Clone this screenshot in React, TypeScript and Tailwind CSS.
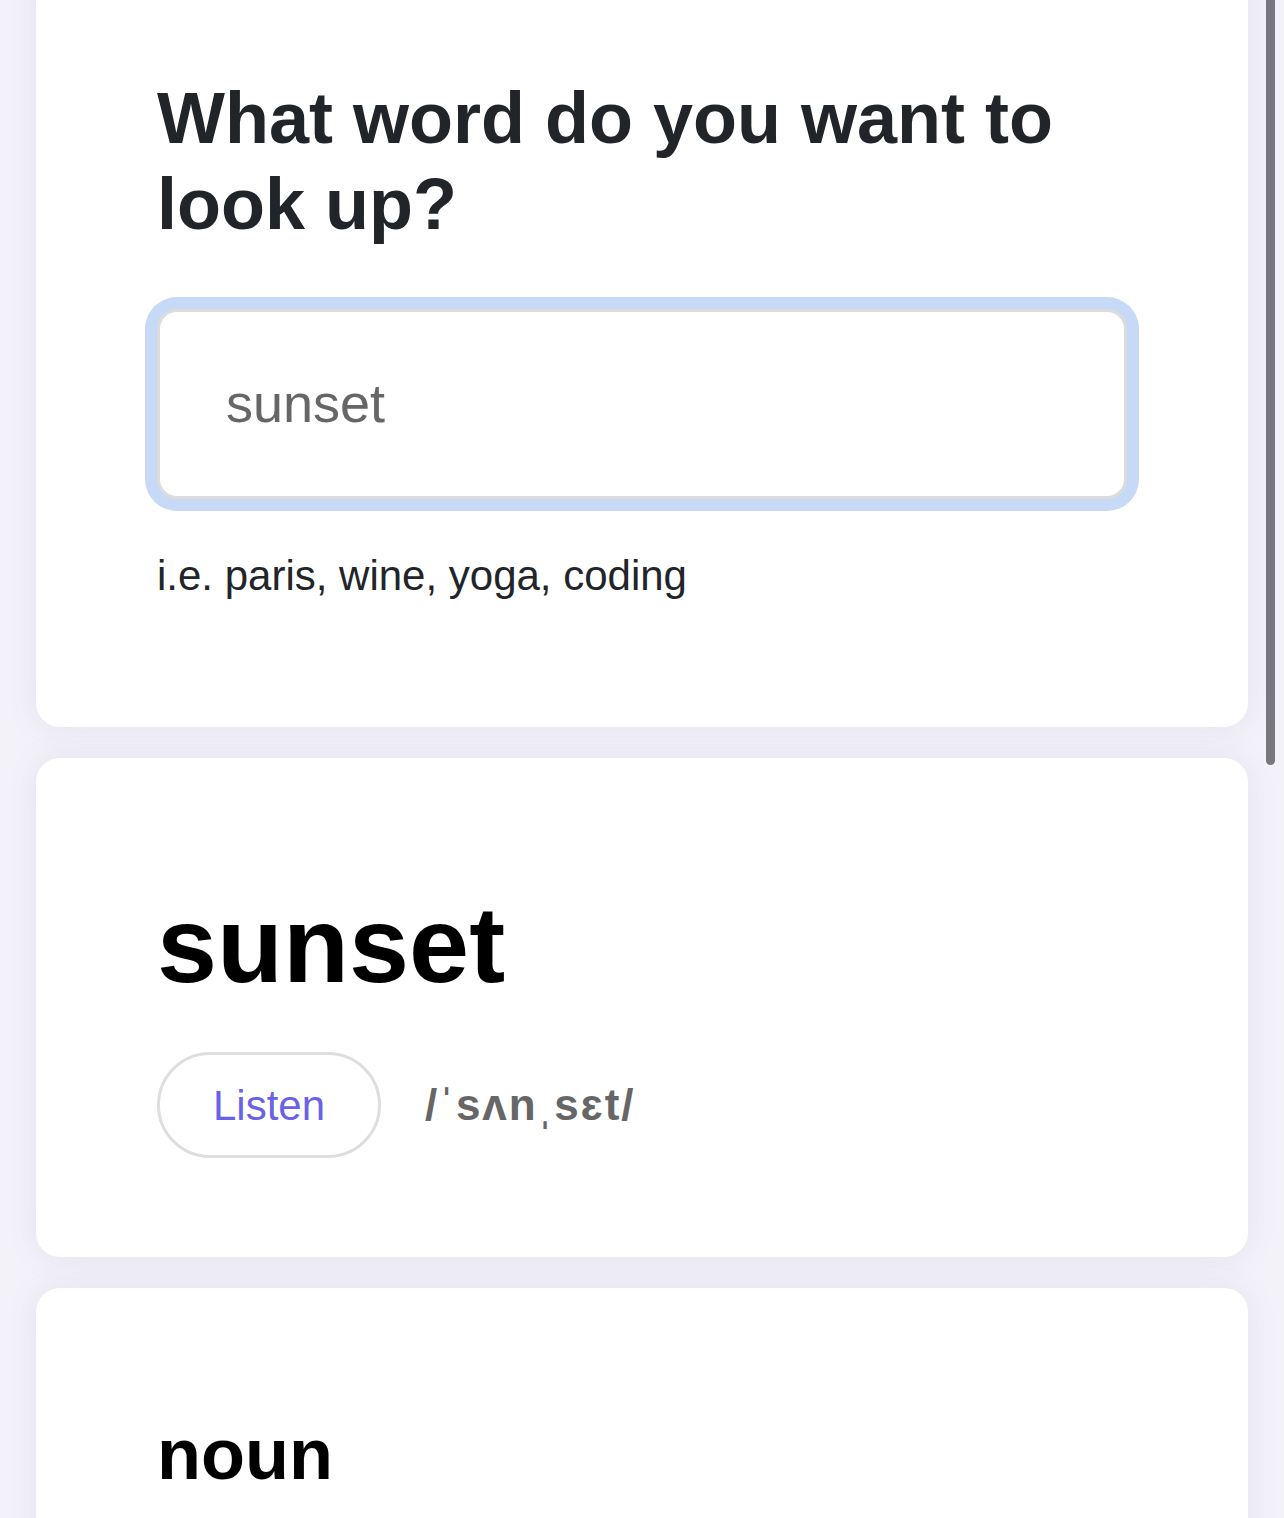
import React from "react";

export default function App() {
  return (
    <div
      className="relative min-h-[1518px] w-full overflow-hidden bg-[#f3f2f9] px-[36px]"
      style={{ fontFamily: '"Liberation Sans", Arial, Helvetica, sans-serif' }}
    >
      <div className="-mt-[45px] flex flex-col gap-[31px]">
        {/* Search card */}
        <section className="rounded-[24px] bg-white px-[121px] pb-[120px] pt-[120px] shadow-[0_0_32px_rgba(95,85,170,0.10)]">
          <h1 className="text-[72px] font-bold leading-[86.4px] text-[#212529]">
            What word do you want to look up?
          </h1>
          <div className="mt-[61px] h-[190px] w-full rounded-[20px] border-[3px] border-[#dcdcdc] bg-white shadow-[0_0_0_12px_#c6daf7]">
            <div className="flex h-full items-center pl-[66px] text-[54px] text-[#666666]">
              sunset
            </div>
          </div>
          <p className="mt-[45px] text-[42px] leading-[63px] text-[#212529]">
            i.e. paris, wine, yoga, coding
          </p>
        </section>

        {/* Word card */}
        <section className="rounded-[24px] bg-white px-[121px] pb-[99px] pt-[122px] shadow-[0_0_32px_rgba(95,85,170,0.10)]">
          <h2 className="text-[108px] font-bold leading-[129.6px] text-black">
            sunset
          </h2>
          <div className="mt-[43px] flex items-center gap-[44px]">
            <button className="flex h-[106px] w-[224px] items-center justify-center rounded-full border-[3px] border-[#dedede] bg-white text-[42px] text-[#6a62e6]">
              Listen
            </button>
            <span className="text-[44px] font-bold tracking-[2px] text-[#666666]">/ˈsʌnˌsɛt/</span>
          </div>
        </section>

        {/* Meaning card */}
        <section className="min-h-[400px] rounded-[24px] bg-white px-[121px] pt-[123px] shadow-[0_0_32px_rgba(95,85,170,0.10)]">
          <h3 className="text-[72px] font-bold leading-[86.4px] text-black">noun</h3>
        </section>
      </div>

      {/* overlay scrollbar */}
      <div className="absolute right-[9px] top-0 h-[765px] w-[9px] rounded-b-full bg-[#78777d]" />
    </div>
  );
}
